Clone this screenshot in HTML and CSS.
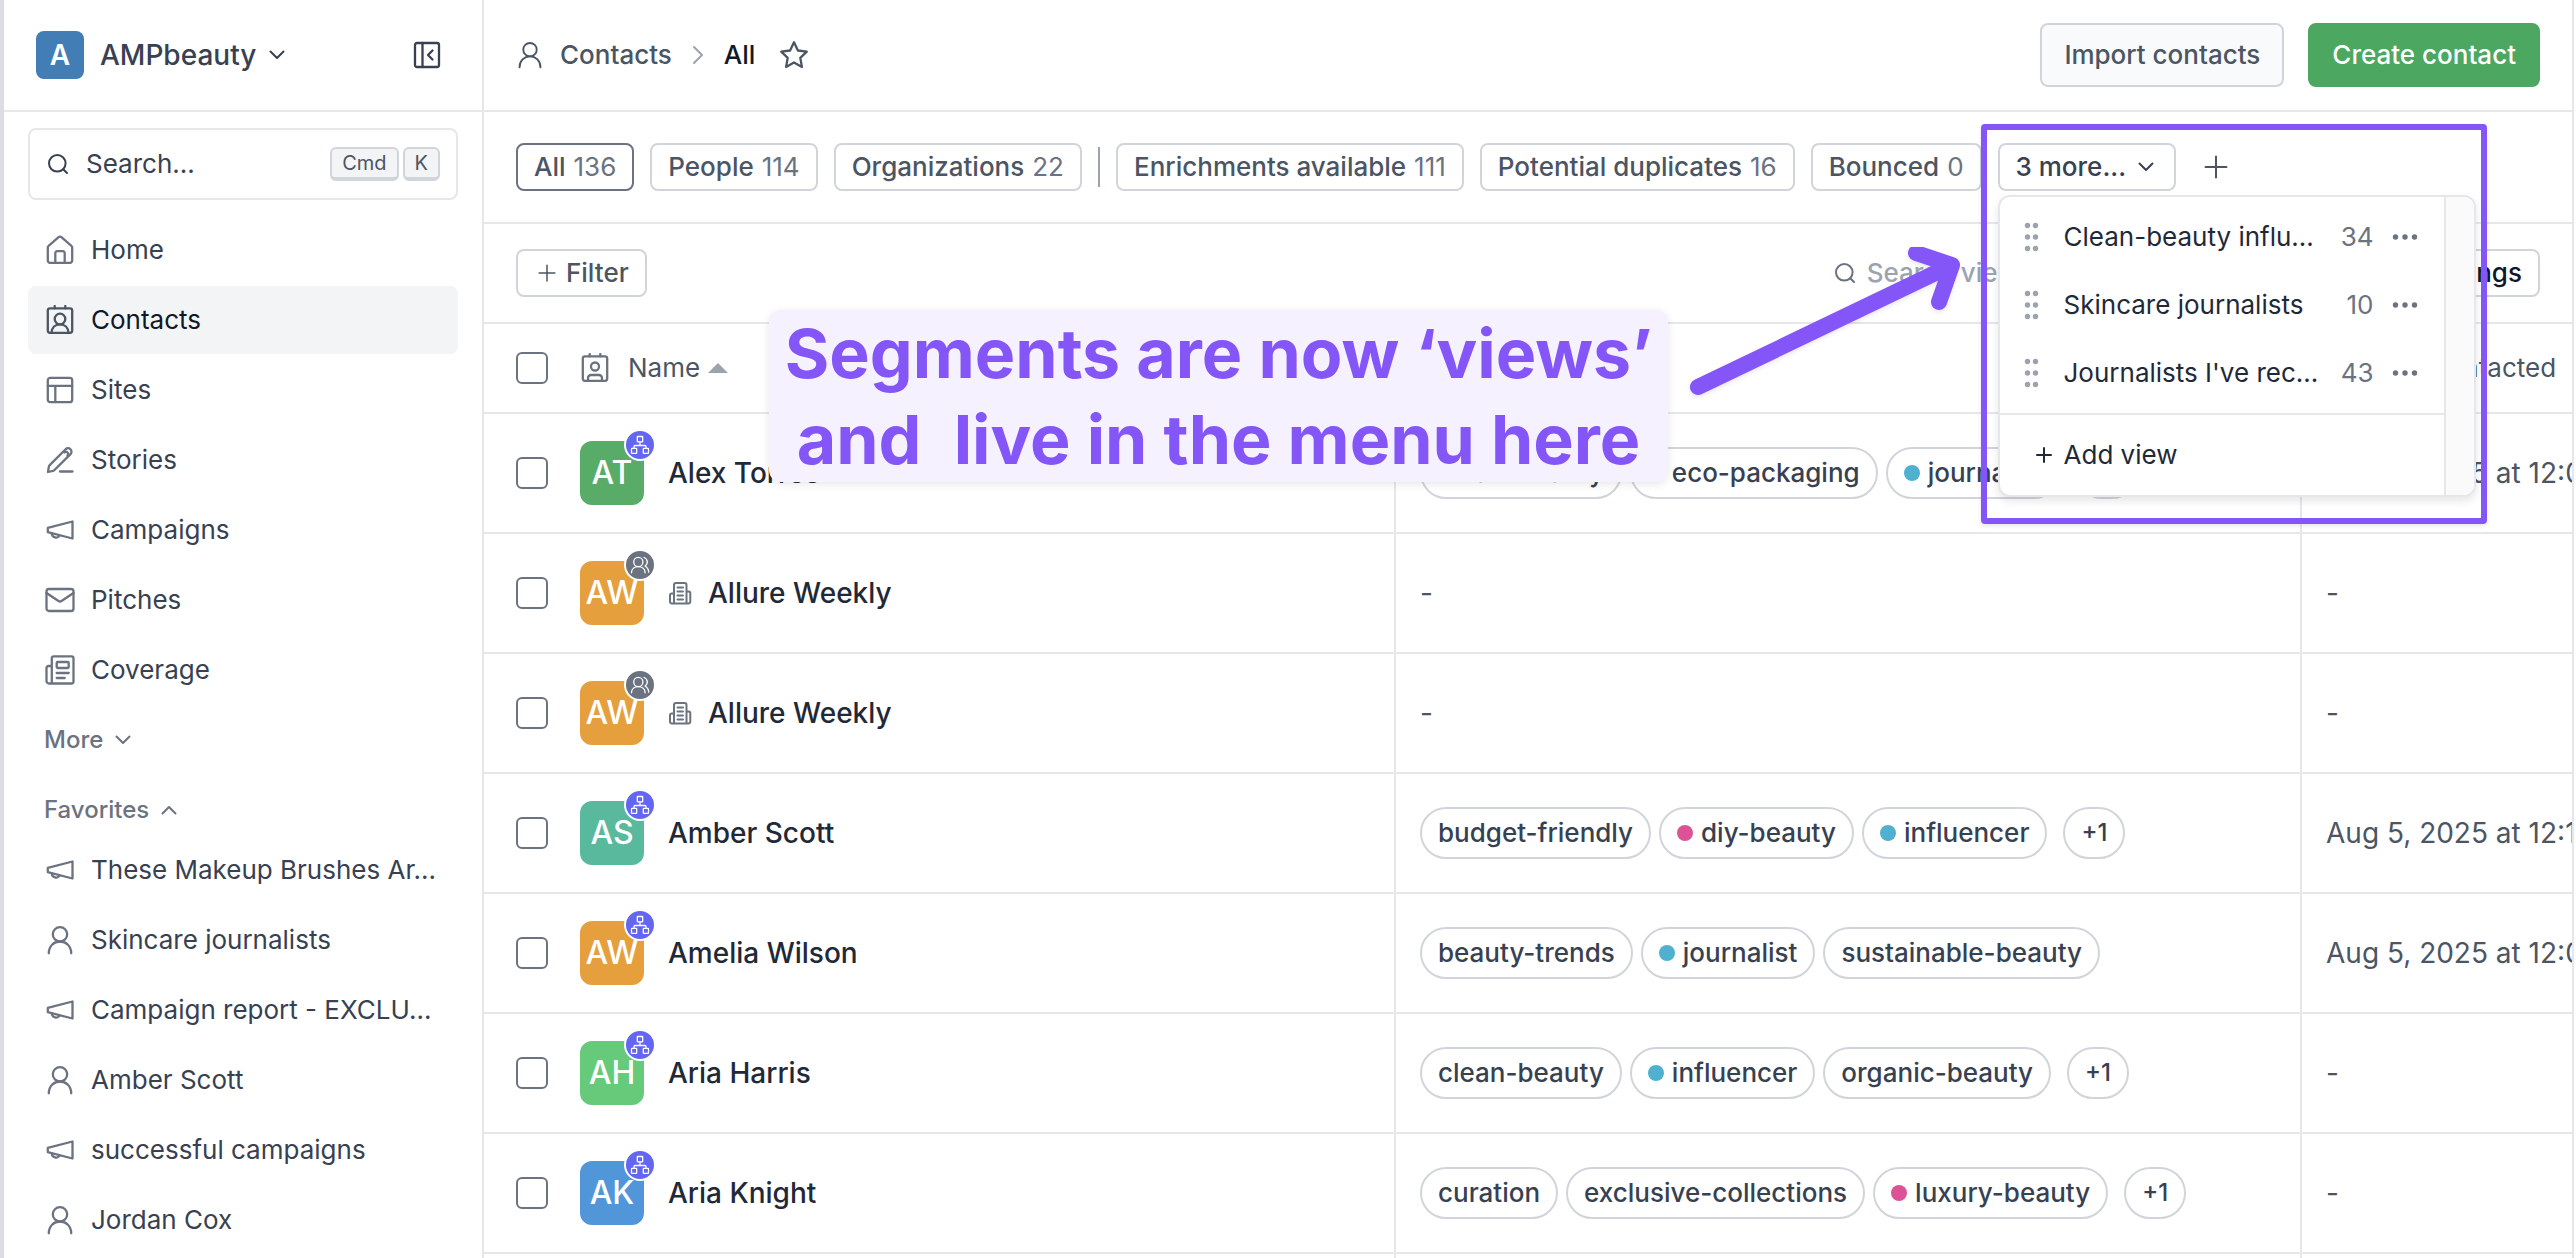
FILE: index.html
```html
<!DOCTYPE html>
<html lang="en">
<head>
    <meta charset="UTF-8">
    <meta name="viewport" content="width=device-width, initial-scale=1.0">
    <title>Contacts - AMPbeauty</title>
    <link rel="stylesheet" href="styles.css">
</head>
<body>
    <!-- Icon sprite -->
    <svg class="sprite" aria-hidden="true">
        <symbol id="i-home" viewBox="0 0 30 30"><path d="M2.8 12.6v13a2.2 2.2 0 0 0 2.2 2.2h20a2.2 2.2 0 0 0 2.2-2.2v-13a2.2 2.2 0 0 0-.8-1.7L16.4 2.2a2.2 2.2 0 0 0-2.8 0L3.6 10.9a2.2 2.2 0 0 0-.8 1.7z"/><path d="M10.3 27.8V18a1.8 1.8 0 0 1 1.8-1.8h5.8a1.8 1.8 0 0 1 1.8 1.8v9.8"/></symbol>
        <symbol id="i-contacts" viewBox="0 0 30 30"><rect x="2.8" y="3.3" width="24.4" height="24.5" rx="2.2"/><path d="M9.7 1v2.3M20.3 1v2.3"/><circle cx="15" cy="14" r="5.3"/><path d="M6.5 27.8c.3-5 3.7-8.500 8.500-8.500s8.200 3.500 8.500 8.500"/></symbol>
        <symbol id="i-card" viewBox="0 0 30 30"><rect x="2.8" y="3.3" width="24.4" height="24.5" rx="2.2"/><path d="M9.7 1v2.3M20.3 1v2.3"/><circle cx="15" cy="13.5" r="4"/><path d="M8 27.5V25a3 3 0 0 1 3-3h8a3 3 0 0 1 3 3v2.5"/></symbol>
        <symbol id="i-sites" viewBox="0 0 30 30"><rect x="2.8" y="2.8" width="24.4" height="24.4" rx="2.5"/><path d="M2.8 10.8h24.4M10.3 10.8v16.400"/></symbol>
        <symbol id="i-stories" viewBox="0 0 30 30"><path d="M3 27l.8-5.2a3 3 0 0 1 .9-1.7L20.6 4.300a3.400 3.400 0 0 1 4.900 4.800L9.500 25a3 3 0 0 1-1.500.9z"/><path d="M19.5 7.5a2 2 0 0 1 3 3M15 26.5h12.5"/></symbol>
        <symbol id="i-campaign" viewBox="0 0 30 30"><path d="M27.5 6.5v17L2.8 17.2v-4.4z"/><path d="M6.8 18.5a4.2 4.2 0 0 0 7.8 2"/></symbol>
        <symbol id="i-mail" viewBox="0 0 30 30"><rect x="1.5" y="4" width="27" height="22" rx="2.5"/><path d="M1.5 8l12 8a2.7 2.7 0 0 0 3 0l12-8"/></symbol>
        <symbol id="i-news" viewBox="0 0 30 30"><path d="M6.8 28.5V3.3a2 2 0 0 1 2-2h17.7a2 2 0 0 1 2 2v23.2a2 2 0 0 1-2 2H4A2.5 2.5 0 0 1 1.500 26V13a2 2 0 0 1 2-2h3.300"/><rect x="11.7" y="7" width="12" height="6" rx="1"/><path d="M11.7 18h12M11.7 23h8"/></symbol>
        <symbol id="i-user" viewBox="0 0 30 30"><circle cx="15" cy="9.3" r="7.2"/><path d="M3.8 28.3c0-7 5-11.8 11.2-11.8s11.2 4.8 11.2 11.8"/></symbol>
        <symbol id="i-search" viewBox="0 0 20 20"><circle cx="9.3" cy="9.3" r="8.3"/><path d="M15.2 15.2l3.8 3.8"/></symbol>
        <symbol id="i-down" viewBox="0 0 16 16"><path d="M1.5 4.5L8 11l6.5-6.5"/></symbol>
        <symbol id="i-up" viewBox="0 0 16 16"><path d="M1.5 11.5L8 5l6.5 6.5"/></symbol>
        <symbol id="i-right" viewBox="0 0 20 20"><path d="M6 2l8 8-8 8"/></symbol>
        <symbol id="i-star" viewBox="0 0 30 30"><path d="M15 2.3l3.9 8.2 8.9 1.2-6.5 6.2 1.6 9-7.9-4.4-7.9 4.4 1.6-9-6.5-6.2 8.9-1.2z"/></symbol>
        <symbol id="i-plus" viewBox="0 0 24 24"><path d="M12 1.5v21M1.500 12h21"/></symbol>
        <symbol id="i-collapse" viewBox="0 0 30 30"><rect x="3" y="3" width="24" height="24" rx="2"/><path d="M10.5 3v24M20.5 10.5L16 15l4.5 4.5"/></symbol>
        <symbol id="i-building" viewBox="0 0 24 24"><path d="M6 22.5V4a2 2 0 0 1 2-2h8.5a2 2 0 0 1 2 2v18.5M6 12.5H3.8A1.8 1.8 0 0 0 2 14.3v6.4a1.8 1.8 0 0 0 1.8 1.8h16.7a1.8 1.8 0 0 0 1.8-1.8v-8.4a1.8 1.8 0 0 0-1.8-1.8h-2"/><path d="M9.5 6.5H15M9.5 10.5H15M9.5 14.5H15M9.5 18.5H15"/></symbol>
        <symbol id="i-sitemap" viewBox="0 0 28 28"><rect x="11.3" y="5.5" width="5.4" height="5.4" rx=".6"/><rect x="5.5" y="17.3" width="5.2" height="5" rx=".6"/><rect x="17.3" y="17.3" width="5.2" height="5" rx=".6"/><path d="M14 11v3.5M8 17v-1.5a1 1 0 0 1 1-1h10a1 1 0 0 1 1 1V17"/></symbol>
        <symbol id="i-users" viewBox="0 0 28 28"><circle cx="12.3" cy="11" r="4.6"/><path d="M5.5 21.8c0-4 3-6.2 6.8-6.2s6.8 2.2 6.8 6.2M18 6.5a4.7 4.7 0 0 1 1 8.5c2 1.2 3.5 3 3.7 6"/></symbol>
        <symbol id="i-drag" viewBox="0 0 16 30"><g fill="currentColor" stroke="none"><circle cx="3.5" cy="3.5" r="2.7"/><circle cx="11.5" cy="3.5" r="2.7"/><circle cx="3.5" cy="15" r="2.7"/><circle cx="11.5" cy="15" r="2.7"/><circle cx="3.5" cy="26.5" r="2.7"/><circle cx="11.5" cy="26.5" r="2.7"/></g></symbol>
        <symbol id="i-dots" viewBox="0 0 26 8"><g fill="currentColor" stroke="none"><circle cx="3.5" cy="4" r="2.7"/><circle cx="13" cy="4" r="2.7"/><circle cx="22.5" cy="4" r="2.7"/></g></symbol>
    </svg>

    <div class="app">
        <aside class="sidebar">
            <div class="workspace">
                <span class="workspace-logo">A</span>
                <button class="workspace-name">AMPbeauty <svg class="icon icon-16"><use href="#i-down"/></svg></button>
                <button class="collapse-btn" aria-label="Collapse sidebar"><svg class="icon icon-30"><use href="#i-collapse"/></svg></button>
            </div>

            <div class="sidebar-body">
                <label class="search-box">
                    <svg class="icon icon-20"><use href="#i-search"/></svg>
                    <input type="text" placeholder="Search..." aria-label="Search">
                    <kbd>Cmd</kbd><kbd>K</kbd>
                </label>

                <nav class="nav">
                    <a href="#" class="nav-item"><svg class="icon icon-30"><use href="#i-home"/></svg><span>Home</span></a>
                    <a href="#" class="nav-item active"><svg class="icon icon-30"><use href="#i-contacts"/></svg><span>Contacts</span></a>
                    <a href="#" class="nav-item"><svg class="icon icon-30"><use href="#i-sites"/></svg><span>Sites</span></a>
                    <a href="#" class="nav-item"><svg class="icon icon-30"><use href="#i-stories"/></svg><span>Stories</span></a>
                    <a href="#" class="nav-item"><svg class="icon icon-30"><use href="#i-campaign"/></svg><span>Campaigns</span></a>
                    <a href="#" class="nav-item"><svg class="icon icon-30"><use href="#i-mail"/></svg><span>Pitches</span></a>
                    <a href="#" class="nav-item"><svg class="icon icon-30"><use href="#i-news"/></svg><span>Coverage</span></a>
                </nav>

                <button class="nav-toggle">More <svg class="icon icon-16"><use href="#i-down"/></svg></button>
                <button class="nav-toggle favorites-toggle">Favorites <svg class="icon icon-16"><use href="#i-up"/></svg></button>

                <nav class="nav">
                    <a href="#" class="nav-item"><svg class="icon icon-30"><use href="#i-campaign"/></svg><span>These Makeup Brushes Ar...</span></a>
                    <a href="#" class="nav-item"><svg class="icon icon-30"><use href="#i-user"/></svg><span>Skincare journalists</span></a>
                    <a href="#" class="nav-item"><svg class="icon icon-30"><use href="#i-campaign"/></svg><span>Campaign report - EXCLU...</span></a>
                    <a href="#" class="nav-item"><svg class="icon icon-30"><use href="#i-user"/></svg><span>Amber Scott</span></a>
                    <a href="#" class="nav-item"><svg class="icon icon-30"><use href="#i-campaign"/></svg><span>successful campaigns</span></a>
                    <a href="#" class="nav-item"><svg class="icon icon-30"><use href="#i-user"/></svg><span>Jordan Cox</span></a>
                </nav>
            </div>
        </aside>

        <main class="main">
            <header class="topbar">
                <a href="#" class="crumb"><svg class="icon icon-28"><use href="#i-user"/></svg>Contacts</a>
                <svg class="icon icon-20 crumb-sep"><use href="#i-right"/></svg>
                <span class="crumb-current">All</span>
                <button class="star-btn" aria-label="Add to favorites"><svg class="icon icon-30"><use href="#i-star"/></svg></button>
                <div class="topbar-actions">
                    <button class="btn btn-light">Import contacts</button>
                    <button class="btn btn-green">Create contact</button>
                </div>
            </header>

            <div class="views">
                <button class="chip selected">All <span>136</span></button>
                <button class="chip">People <span>114</span></button>
                <button class="chip">Organizations <span>22</span></button>
                <span class="views-divider"></span>
                <button class="chip">Enrichments available <span>111</span></button>
                <button class="chip">Potential duplicates <span>16</span></button>
                <button class="chip">Bounced <span>0</span></button>
                <div class="more-views">
                    <button class="chip chip-dark">3 more... <svg class="icon icon-16"><use href="#i-down"/></svg></button>

                    <div class="menu">
                        <div class="menu-main">
                            <ul class="menu-list">
                                <li class="menu-item"><svg class="drag"><use href="#i-drag"/></svg><a href="#">Clean-beauty influ...</a><span class="menu-count">34</span><button aria-label="View options"><svg class="dots"><use href="#i-dots"/></svg></button></li>
                                <li class="menu-item"><svg class="drag"><use href="#i-drag"/></svg><a href="#">Skincare journalists</a><span class="menu-count">10</span><button aria-label="View options"><svg class="dots"><use href="#i-dots"/></svg></button></li>
                                <li class="menu-item"><svg class="drag"><use href="#i-drag"/></svg><a href="#">Journalists I've rec...</a><span class="menu-count">43</span><button aria-label="View options"><svg class="dots"><use href="#i-dots"/></svg></button></li>
                            </ul>
                            <button class="menu-add"><svg class="icon icon-16"><use href="#i-plus"/></svg>Add view</button>
                        </div>
                        <div class="menu-gutter"></div>
                    </div>

                    <!-- Feature tour highlight -->
                    <div class="tour-frame"></div>
                    <svg class="tour-arrow" viewBox="0 0 300 160"><path d="M22 140L276 18M240 6l36 12-13 37"/></svg>
                    <div class="tour-note">Segments are now ‘views’
and  live in the menu here</div>
                </div>
                <button class="add-btn" aria-label="Add view"><svg class="icon icon-24"><use href="#i-plus"/></svg></button>
            </div>

            <div class="toolbar">
                <button class="chip filter-btn"><svg class="icon icon-18"><use href="#i-plus"/></svg> Filter</button>
                <label class="view-search">
                    <svg class="icon icon-20"><use href="#i-search"/></svg>
                    <input type="text" placeholder="Search view..." aria-label="Search view">
                </label>
                <button class="chip chip-dark">Settings</button>
            </div>

            <div class="table-wrap">
                <table class="contacts">
                    <thead>
                        <tr>
                            <th class="col-name">
                                <div class="name-cell">
                                    <input type="checkbox" aria-label="Select all">
                                    <svg class="icon icon-30 head-icon"><use href="#i-card"/></svg>
                                    <span>Name</span><span class="sort-up"></span>
                                </div>
                            </th>
                            <th class="col-tags"></th>
                            <th class="col-date"><div class="head-cell"><svg class="icon icon-30"><use href="#i-card"/></svg>Last contacted</div></th>
                        </tr>
                    </thead>
                    <tbody>
                        <tr>
                            <td><div class="name-cell">
                                <input type="checkbox" aria-label="Select Alex Torres">
                                <span class="avatar green">AT<svg class="badge"><use href="#i-sitemap"/></svg></span>
                                <a href="#">Alex Torres</a>
                            </div></td>
                            <td><div class="tags"><span class="tag">clean-beauty</span><span class="tag"><i class="dot blue"></i>eco-packaging</span><span class="tag"><i class="dot blue"></i>journalist</span><span class="tag tag-more">+1</span></div></td>
                            <td>Aug 5, 2025 at 12:07 PM</td>
                        </tr>
                        <tr>
                            <td><div class="name-cell">
                                <input type="checkbox" aria-label="Select Allure Weekly">
                                <span class="avatar orange">AW<svg class="badge badge-gray"><use href="#i-users"/></svg></span>
                                <svg class="icon icon-24 org-icon"><use href="#i-building"/></svg>
                                <a href="#">Allure Weekly</a>
                            </div></td>
                            <td>-</td>
                            <td>-</td>
                        </tr>
                        <tr>
                            <td><div class="name-cell">
                                <input type="checkbox" aria-label="Select Allure Weekly">
                                <span class="avatar orange">AW<svg class="badge badge-gray"><use href="#i-users"/></svg></span>
                                <svg class="icon icon-24 org-icon"><use href="#i-building"/></svg>
                                <a href="#">Allure Weekly</a>
                            </div></td>
                            <td>-</td>
                            <td>-</td>
                        </tr>
                        <tr>
                            <td><div class="name-cell">
                                <input type="checkbox" aria-label="Select Amber Scott">
                                <span class="avatar teal">AS<svg class="badge"><use href="#i-sitemap"/></svg></span>
                                <a href="#">Amber Scott</a>
                            </div></td>
                            <td><div class="tags"><span class="tag">budget-friendly</span><span class="tag"><i class="dot pink"></i>diy-beauty</span><span class="tag"><i class="dot blue"></i>influencer</span><span class="tag tag-more">+1</span></div></td>
                            <td>Aug 5, 2025 at 12:10 PM</td>
                        </tr>
                        <tr>
                            <td><div class="name-cell">
                                <input type="checkbox" aria-label="Select Amelia Wilson">
                                <span class="avatar orange">AW<svg class="badge"><use href="#i-sitemap"/></svg></span>
                                <a href="#">Amelia Wilson</a>
                            </div></td>
                            <td><div class="tags"><span class="tag">beauty-trends</span><span class="tag"><i class="dot blue"></i>journalist</span><span class="tag">sustainable-beauty</span></div></td>
                            <td>Aug 5, 2025 at 12:07 PM</td>
                        </tr>
                        <tr>
                            <td><div class="name-cell">
                                <input type="checkbox" aria-label="Select Aria Harris">
                                <span class="avatar lime">AH<svg class="badge"><use href="#i-sitemap"/></svg></span>
                                <a href="#">Aria Harris</a>
                            </div></td>
                            <td><div class="tags"><span class="tag">clean-beauty</span><span class="tag"><i class="dot blue"></i>influencer</span><span class="tag">organic-beauty</span><span class="tag tag-more">+1</span></div></td>
                            <td>-</td>
                        </tr>
                        <tr>
                            <td><div class="name-cell">
                                <input type="checkbox" aria-label="Select Aria Knight">
                                <span class="avatar blue">AK<svg class="badge"><use href="#i-sitemap"/></svg></span>
                                <a href="#">Aria Knight</a>
                            </div></td>
                            <td><div class="tags"><span class="tag">curation</span><span class="tag">exclusive-collections</span><span class="tag"><i class="dot pink"></i>luxury-beauty</span><span class="tag tag-more">+1</span></div></td>
                            <td>-</td>
                        </tr>
                        <tr><td></td><td></td><td></td></tr>
                    </tbody>
                </table>
            </div>
        </main>
    </div>
</body>
</html>
```
FILE: styles.css
```css
* {
    box-sizing: border-box;
}

body {
    margin: 0;
    font-family: Inter, "Liberation Sans", sans-serif;
    font-size: 26px;
    line-height: 32px;
    color: #374151;
    background: #fff;
}

button,
input {
    font: inherit;
    color: inherit;
}

button {
    background: none;
    border: none;
    padding: 0;
    cursor: pointer;
}

a {
    color: inherit;
    text-decoration: none;
}

.sprite {
    position: absolute;
    width: 0;
    height: 0;
}

.icon {
    flex: none;
    fill: none;
    stroke: currentColor;
    stroke-width: 2;
    stroke-linecap: round;
    stroke-linejoin: round;
}

.icon-16 { width: 16px; height: 16px; }
.icon-18 { width: 18px; height: 18px; }
.icon-20 { width: 20px; height: 20px; }
.icon-24 { width: 24px; height: 24px; }
.icon-28 { width: 28px; height: 28px; }
.icon-30 { width: 30px; height: 30px; stroke-width: 2.3; }

.app {
    display: flex;
    height: 100vh;
    overflow: hidden;
    border-left: 4px solid #dddce3;
}

/* Sidebar */
.sidebar {
    flex: none;
    width: 480px;
    border-right: 2px solid #e5e7eb;
}

.workspace {
    display: flex;
    align-items: center;
    height: 112px;
    padding: 0 40px 0 32px;
    border-bottom: 2px solid #e5e7eb;
}

.workspace-logo {
    width: 48px;
    height: 48px;
    border-radius: 8px;
    background: #427db5;
    color: #fff;
    font-size: 28px;
    font-weight: 600;
    line-height: 48px;
    text-align: center;
}

.workspace-name {
    display: flex;
    align-items: center;
    gap: 13px;
    margin-left: 16px;
    font-size: 28px;
    font-weight: 500;
}

.collapse-btn {
    display: flex;
    margin-left: auto;
}

.sidebar-body {
    padding: 16px 24px;
}

.search-box {
    display: flex;
    align-items: center;
    height: 72px;
    margin-bottom: 16px;
    padding: 0 16px 0 18px;
    border: 2px solid #e5e7eb;
    border-radius: 8px;
}

.search-box input {
    flex: 1;
    min-width: 0;
    margin-left: 18px;
    padding: 0;
    border: none;
    outline: none;
}

.search-box input::placeholder {
    color: #374151;
    opacity: 1;
}

kbd {
    margin-left: 4px;
    padding: 0 10px;
    border: 2px solid #d1d5db;
    border-bottom-width: 4px;
    border-radius: 6px;
    background: #f3f4f6;
    color: #4b5563;
    font-family: inherit;
    font-size: 20px;
    line-height: 28px;
}

.nav {
    display: flex;
    flex-direction: column;
    gap: 2px;
}

.nav-item {
    display: flex;
    align-items: center;
    gap: 16px;
    height: 68px;
    padding: 0 17px;
    border-radius: 8px;
    white-space: nowrap;
}

.nav-item .icon {
    color: #6b7280;
}

.nav-item.active {
    background: #f3f4f6;
    color: #111827;
}

.nav-item.active .icon {
    color: #4b5563;
}

.nav-toggle {
    display: flex;
    align-items: center;
    gap: 12px;
    height: 68px;
    margin-top: 2px;
    padding: 0 16px;
    color: #6b7280;
    font-size: 24px;
    font-weight: 500;
}

.favorites-toggle {
    height: 60px;
    padding-top: 8px;
}

/* Main area */
.main {
    flex: 1;
    min-width: 0;
    margin-right: 2px;
    border-right: 2px solid #e5e7eb;
}

.topbar,
.views,
.toolbar {
    display: flex;
    align-items: center;
    padding: 0 32px;
    border-bottom: 2px solid #e5e7eb;
    white-space: nowrap;
}

.topbar {
    height: 112px;
    font-weight: 500;
    color: #4b5563;
}

.crumb {
    display: flex;
    align-items: center;
    gap: 16px;
}

.crumb-sep {
    margin: 0 16px;
    color: #9ca3af;
}

.crumb-current {
    color: #111827;
}

.star-btn {
    display: flex;
    margin-left: 24px;
}

.topbar-actions {
    display: flex;
    gap: 24px;
    margin-left: auto;
}

.btn {
    height: 64px;
    padding: 0 22px;
    border: 2px solid transparent;
    border-radius: 8px;
    font-weight: 500;
}

.btn-light {
    border-color: #d1d5db;
    background: #f9fafb;
    color: #4b5563;
}

.btn-green {
    border-color: #4ca761;
    background: #4ca761;
    color: #fff;
}

.views {
    gap: 16px;
    height: 112px;
}

.chip {
    display: flex;
    align-items: center;
    gap: 8px;
    height: 48px;
    padding: 0 16px;
    border: 2px solid #d1d5db;
    border-radius: 8px;
    background: #fff;
    color: #4b5563;
    font-weight: 500;
}

.chip span {
    color: #6b7280;
    font-weight: 400;
}

.chip.selected {
    border-color: #6b7280;
}

.chip-dark {
    color: #374151;
}

.views-divider {
    width: 2px;
    height: 40px;
    background: #9ca3af;
}

.more-views {
    position: relative;
}

.more-views .chip {
    gap: 12px;
    padding-right: 20px;
}

.add-btn {
    display: flex;
    margin-left: 12px;
    color: #4b5563;
}

/* Views menu */
.menu {
    position: absolute;
    z-index: 2;
    top: 52px;
    left: 0;
    display: flex;
    width: 478px;
    border: 2px solid #e5e7eb;
    border-radius: 12px;
    background: #fff;
    box-shadow: 0 4px 8px rgba(0, 0, 0, 0.1);
    overflow: hidden;
}

.menu-main {
    flex: 1;
}

.menu-gutter {
    width: 30px;
    border-left: 2px solid #e5e7eb;
    background: #fafafa;
}

.menu-list {
    margin: 0;
    padding: 6px 0;
    border-bottom: 2px solid #e5e7eb;
    list-style: none;
}

.menu-item {
    display: flex;
    align-items: center;
    height: 68px;
    padding: 0 26px 0 24px;
    color: #1f2937;
}

.menu-item a {
    flex: 1;
    margin-left: 24px;
}

.menu-count {
    color: #6b7280;
}

.menu-item button {
    display: flex;
    margin-left: 18px;
}

.drag {
    width: 16px;
    height: 30px;
    color: #9ca3af;
}

.dots {
    width: 26px;
    height: 8px;
    color: #6b7280;
}

.menu-add {
    display: flex;
    align-items: center;
    gap: 12px;
    height: 80px;
    padding-left: 36px;
    color: #1f2937;
}

.menu-add .icon {
    stroke-width: 3;
}

/* Tour highlight, placed from the "3 more..." button */
.tour-frame {
    position: absolute;
    z-index: 3;
    top: -19px;
    left: -17px;
    width: 506px;
    height: 400px;
    border: 6px solid #8456f7;
    border-radius: 4px;
    box-shadow: 0 2px 4px rgba(0, 0, 0, 0.1);
    pointer-events: none;
}

.tour-arrow {
    position: absolute;
    z-index: 3;
    top: 104px;
    left: -322px;
    width: 300px;
    height: 160px;
    fill: none;
    stroke: #8456f7;
    stroke-width: 16;
    stroke-linecap: round;
    stroke-linejoin: round;
    filter: drop-shadow(0 2px 2px rgba(0, 0, 0, 0.1));
}

.tour-note {
    position: absolute;
    z-index: 3;
    top: 167px;
    right: 508px;
    width: 899px;
    border-radius: 12px;
    background: #f5f1fe;
    color: #8456f7;
    font-size: 68px;
    font-weight: 700;
    line-height: 86px;
    text-align: center;
    white-space: pre;
    box-shadow: 0 2px 8px rgba(0, 0, 0, 0.1);
}

.toolbar {
    gap: 24px;
    height: 100px;
}

.filter-btn {
    gap: 10px;
    padding-left: 20px;
}

.view-search {
    display: flex;
    align-items: center;
    gap: 12px;
    margin-left: auto;
    color: #6b7280;
}

.view-search input {
    width: 512px;
    padding: 0;
    border: none;
    outline: none;
    font-weight: 500;
}

.view-search input::placeholder {
    color: #9ca3af;
    opacity: 1;
}

.toolbar .chip-dark {
    color: #111827;
}

/* Contacts table */
.table-wrap {
    overflow: hidden;
}

.contacts {
    width: 2200px;
    table-layout: fixed;
    border-collapse: separate;
    border-spacing: 0;
}

.col-name { width: 912px; }
.col-tags { width: 906px; }

.contacts th,
.contacts td {
    padding: 0 24px;
    border-right: 2px solid #e5e7eb;
    border-bottom: 2px solid #e5e7eb;
    text-align: left;
    white-space: nowrap;
    color: #4b5563;
}

.contacts th {
    height: 90px;
    border-right: none;
    font-weight: 400;
}

.contacts td {
    height: 120px;
    font-size: 28px;
}

.contacts th:first-child,
.contacts td:first-child {
    padding-left: 32px;
}

.name-cell,
.head-cell {
    display: flex;
    align-items: center;
}

.head-cell {
    gap: 18px;
}

.name-cell a {
    margin-left: 24px;
    color: #1f2937;
    font-weight: 500;
}

.org-icon {
    margin-left: 24px;
    color: #6b7280;
}

.org-icon + a {
    margin-left: 16px;
}

.head-icon {
    margin-right: 18px;
    color: #6b7280;
}

.sort-up {
    margin-left: 8px;
    border: 10px solid transparent;
    border-top: none;
    border-bottom-color: #9ca3af;
}

input[type="checkbox"] {
    appearance: none;
    width: 32px;
    height: 32px;
    margin: 0 32px 0 0;
    border: 2px solid #6b7280;
    border-radius: 6px;
    background: #fff;
}

.avatar {
    position: relative;
    width: 64px;
    height: 64px;
    border-radius: 12px;
    color: #fff;
    font-size: 32px;
    font-weight: 500;
    line-height: 64px;
    text-align: center;
}

.avatar.green { background: #58ac68; }
.avatar.orange { background: #e5a03d; }
.avatar.teal { background: #59b99d; }
.avatar.lime { background: #66ca7a; }
.avatar.blue { background: #5096d8; }

.badge {
    position: absolute;
    top: -12px;
    right: -12px;
    width: 32px;
    height: 32px;
    border: 2px solid #fff;
    border-radius: 50%;
    background: #6366f1;
    fill: none;
    stroke: #fff;
    stroke-width: 1.3;
    stroke-linecap: round;
    stroke-linejoin: round;
}

.badge-gray {
    background: #6b7280;
}

.tags {
    display: flex;
    gap: 8px;
}

.tag {
    display: flex;
    align-items: center;
    gap: 8px;
    height: 52px;
    padding: 0 16px;
    border: 2px solid #d1d5db;
    border-radius: 26px;
    color: #374151;
    font-size: 26px;
    font-weight: 500;
}

.tag-more {
    margin-left: 8px;
    font-size: 24px;
}

.dot {
    width: 16px;
    height: 16px;
    border-radius: 50%;
}

.dot.blue { background: #4fb0d0; }
.dot.pink { background: #dc5297; }
```
